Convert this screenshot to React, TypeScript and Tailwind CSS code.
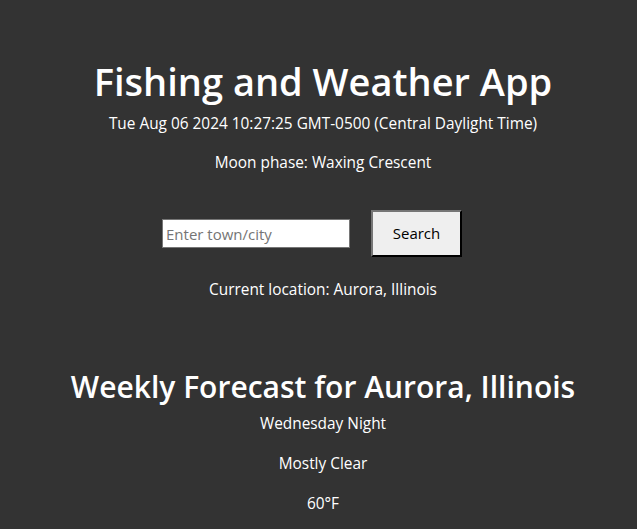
import { FC } from 'react';

const font = { fontFamily: '"Open Sans", "Noto Sans", sans-serif' };

const App: FC = () => {
  return (
    <div
      className="min-h-[529px] bg-[#333333] text-white text-center flex flex-col items-center pl-[9px] pt-[57px]"
      style={font}
    >
      <h1 className="text-[38px] leading-[48px] font-semibold">Fishing and Weather App</h1>
      <p className="mt-[7px] text-[15.4px] leading-[24px]">
        Tue Aug 06 2024 10:27:25 GMT-0500 (Central Daylight Time)
      </p>
      <p className="mt-[15px] text-[15.4px] leading-[24px]">Moon phase: Waxing Crescent</p>

      <div className="mt-[35px] flex items-center justify-center gap-[21px] pr-[22px]">
        <input
          type="text"
          placeholder="Enter town/city"
          className="w-[188px] h-[29px] bg-white border border-[#767676] px-[3px] text-[15px] text-black placeholder:text-[#757575] outline-none"
          style={font}
        />
        <button
          className="w-[91px] h-[47px] bg-[#efefef] text-black text-[15px] border-2 border-t-[#767676] border-l-[#767676] border-b-black border-r-black"
          style={font}
        >
          Search
        </button>
      </div>

      <p className="mt-[21px] text-[15.4px] leading-[24px]">Current location: Aurora, Illinois</p>

      <h2 className="mt-[65px] text-[30px] leading-[40px] font-semibold">
        Weekly Forecast for Aurora, Illinois
      </h2>
      <div className="mt-[5px] flex flex-col gap-[16px] text-[15.4px] leading-[24px]">
        <p>Wednesday Night</p>
        <p>Mostly Clear</p>
        <p>60°F</p>
      </div>
    </div>
  );
};

export default App;
